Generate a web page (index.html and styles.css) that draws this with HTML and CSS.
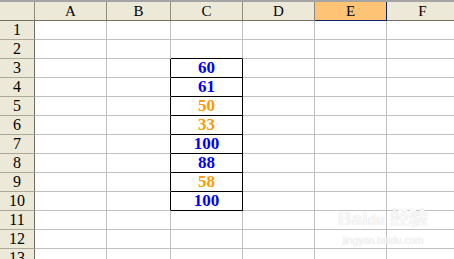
FILE: index.html
```html
<!DOCTYPE html>
<html lang="zh">
<head>
  <meta charset="UTF-8">
  <meta name="viewport" content="width=device-width, initial-scale=1.0">
  <title>Sheet1</title>
  <link rel="stylesheet" href="styles.css">
</head>
<body>
  <div class="sheet">
    <table class="grid">
      <thead>
        <tr>
          <th class="corner"></th>
          <th class="col-a">A</th>
          <th class="col-b">B</th>
          <th class="col-c">C</th>
          <th class="col-d">D</th>
          <th class="col-e active">E</th>
          <th class="col-f">F</th>
        </tr>
      </thead>
      <tbody>
        <tr><th>1</th><td></td><td></td><td></td><td></td><td></td><td></td></tr>
        <tr><th>2</th><td></td><td></td><td class="box-top"></td><td></td><td></td><td></td></tr>
        <tr><th>3</th><td></td><td class="box-left"></td><td class="box blue">60</td><td></td><td></td><td></td></tr>
        <tr><th>4</th><td></td><td class="box-left"></td><td class="box blue">61</td><td></td><td></td><td></td></tr>
        <tr><th>5</th><td></td><td class="box-left"></td><td class="box orange">50</td><td></td><td></td><td></td></tr>
        <tr><th>6</th><td></td><td class="box-left"></td><td class="box orange">33</td><td></td><td></td><td></td></tr>
        <tr><th>7</th><td></td><td class="box-left"></td><td class="box blue">100</td><td></td><td></td><td></td></tr>
        <tr><th>8</th><td></td><td class="box-left"></td><td class="box blue">88</td><td></td><td></td><td></td></tr>
        <tr><th>9</th><td></td><td class="box-left"></td><td class="box orange">58</td><td></td><td></td><td></td></tr>
        <tr><th>10</th><td></td><td class="box-left"></td><td class="box blue">100</td><td></td><td></td><td></td></tr>
        <tr><th>11</th><td></td><td></td><td></td><td></td><td></td><td></td></tr>
        <tr><th>12</th><td></td><td></td><td></td><td></td><td></td><td></td></tr>
        <tr><th>13</th><td></td><td></td><td></td><td></td><td></td><td></td></tr>
      </tbody>
    </table>
    <div class="watermark">
      <span class="wm-logo">Bai<span class="wm-du">du</span> 经验</span>
      <span class="wm-url">jingyan.baidu.com</span>
    </div>
  </div>
</body>
</html>
```

FILE: styles.css
```css
* {
  box-sizing: border-box;
}
body {
  margin: 0;
  background-color: #fff;
}
.sheet {
  position: relative;
  width: 454px;
  height: 259px;
  overflow: hidden;
  border-top: 2px solid #a5a5a5;
}
.grid {
  table-layout: fixed;
  width: 459px;
  border-collapse: separate;
  border-spacing: 0;
}
.grid th,
.grid td {
  height: 19px;
  padding: 0;
  border-right: 1px solid #c0c0c0;
  border-bottom: 1px solid #c0c0c0;
  text-align: center;
  vertical-align: middle;
  overflow: hidden;
  white-space: nowrap;
}
/* 헤더 */
.grid thead th {
  height: 19px;
  background-color: #ece9d8;
  border-right: 1px solid #8d8a7a;
  border-bottom: 1px solid #716f64;
  font: normal 15px/18px "Liberation Serif", serif;
  color: #000;
}
.grid .corner { width: 35px; }
.grid .col-a { width: 72px; }
.grid .col-b { width: 64px; }
.grid .col-c,
.grid .col-d,
.grid .col-e,
.grid .col-f { width: 72px; }
.grid thead th.active {
  background-color: #ffc375;
  border-right-color: #0a246a;
  border-bottom-color: #0a246a;
}
.grid tbody th {
  background-color: #ece9d8;
  border-right: 1px solid #716f64;
  border-bottom: 1px solid #aca899;
  font: normal 16px/18px "Liberation Serif", serif;
  color: #000;
}
.grid td {
  font: bold 17px/18px "Liberation Serif", serif;
  vertical-align: bottom;
}
.grid .box-top {
  border-bottom-color: #000;
}
.grid .box-left {
  border-right-color: #000;
}
.grid .box {
  border-right-color: #000;
  border-bottom-color: #000;
}
.blue { color: #0000ff; }
.orange { color: #ff9900; }
.watermark {
  position: absolute;
  left: 338px;
  top: 203px;
  display: flex;
  flex-direction: column;
  align-items: center;
  color: #f7f7f7;
  font-family: "Liberation Sans", "Noto Sans CJK SC", sans-serif;
  text-shadow: 0 0 1px #d4d4d4;
}
.wm-logo {
  font-size: 19px;
  line-height: 28px;
  font-weight: bold;
}
.wm-du {
  font-size: 14px;
}
.wm-url {
  font-size: 10px;
  line-height: 13px;
}
```
